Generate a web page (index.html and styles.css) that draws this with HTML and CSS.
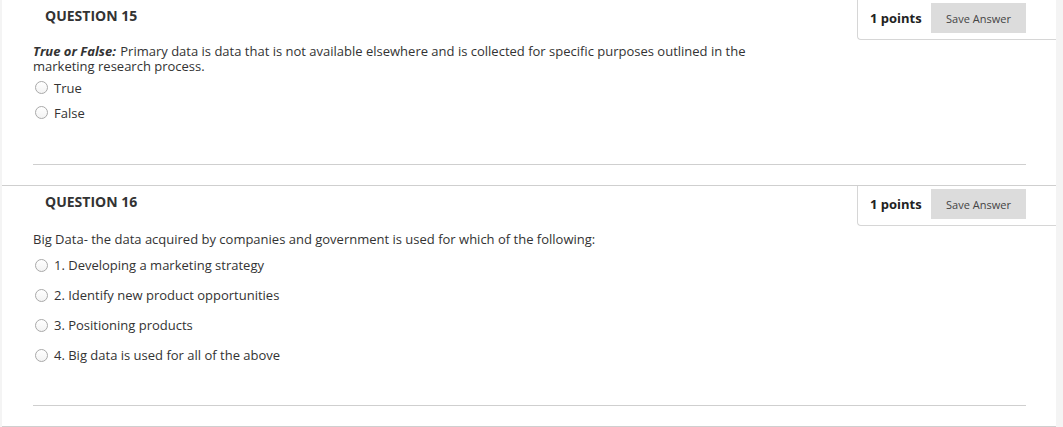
FILE: index.html
```html
<!DOCTYPE html>
<html>
<head>
<meta charset="utf-8">
<link rel="stylesheet" href="styles.css">
</head>
<body>
<div class="page">
  <section class="question">
    <div class="q-head">
      <h3 class="q-title">QUESTION 15</h3>
      <div class="points-box">
        <span class="points">1 points</span>
        <button class="save-btn">Save Answer</button>
      </div>
    </div>
    <div class="q-body">
      <p class="q-text"><b class="lead"><i>True or False:</i></b> Primary data is data that is not available elsewhere and is collected for specific purposes outlined in the marketing research process.</p>
      <ul class="options tf">
        <li class="option"><span class="radio"></span><span>True</span></li>
        <li class="option"><span class="radio"></span><span>False</span></li>
      </ul>
      <hr class="sep sep-tf">
    </div>
  </section>
  <section class="question">
    <div class="q-head">
      <h3 class="q-title">QUESTION 16</h3>
      <div class="points-box">
        <span class="points">1 points</span>
        <button class="save-btn">Save Answer</button>
      </div>
    </div>
    <div class="q-body">
      <p class="q-text q-text-mc">Big Data- the data acquired by companies and government is used for which of the following:</p>
      <ul class="options mc">
        <li class="option"><span class="radio"></span><span>1. Developing a marketing strategy</span></li>
        <li class="option"><span class="radio"></span><span>2. Identify new product opportunities</span></li>
        <li class="option"><span class="radio"></span><span>3. Positioning products</span></li>
        <li class="option"><span class="radio"></span><span>4. Big data is used for all of the above</span></li>
      </ul>
      <hr class="sep sep-mc">
    </div>
  </section>
</div>
</body>
</html>
```

FILE: styles.css
```css
* { box-sizing: border-box; }
html, body {
  margin: 0;
  padding: 0;
  background: #f4f4f4;
}
body {
  font-family: "Open Sans", "Liberation Sans", sans-serif;
  color: #333;
  padding-left: 2px;
}
.page {
  width: 1054px;
  background: #fff;
}
.question {
  border-bottom: 1px solid #cfcfcf;
}
.q-head {
  display: flex;
  justify-content: space-between;
  align-items: flex-start;
}
.q-title {
  margin: 0;
  padding: 6px 0 0 43px;
  font-size: 14px;
  line-height: 20px;
  font-weight: 700;
  color: #333;
}
.points-box {
  width: 199px;
  display: flex;
  align-items: center;
  padding: 3px 30px 6px 12px;
  border-left: 1px solid #d6d6d6;
  border-bottom: 1px solid #d6d6d6;
  border-bottom-left-radius: 4px;
}
.points {
  font-size: 13px;
  font-weight: 700;
  color: #222;
  flex: 1;
}
.save-btn {
  display: block;
  width: 95px;
  height: 30px;
  margin: 0;
  border: none;
  background: #dcdcdc;
  color: #444;
  font-family: inherit;
  font-size: 11px;
  padding: 0;
}
.q-body {
  padding: 4px 31px 0 31px;
}
.q-text {
  margin: 0;
  font-size: 13px;
  line-height: 15px;
  width: 730px;
}
.lead {
  display: inline-block;
  margin-right: 1px;
}
.q-text-mc {
  margin-top: 2px;
  width: auto;
}
.options {
  list-style: none;
  margin: 1px 0 0 0;
  padding: 0;
}
.option {
  display: flex;
  align-items: center;
  gap: 6px;
  padding-left: 2px;
  font-size: 13px;
}
.tf .option { height: 25px; }
.mc { margin-top: 3px; }
.mc .option { height: 30px; }
.radio {
  width: 13px;
  height: 13px;
  border-radius: 50%;
  border: 1px solid #a9a9a9;
  background: linear-gradient(#fff, #f3f3f3);
  flex: none;
}
.sep {
  border: none;
  border-top: 1px solid #cfcfcf;
  margin: 0;
  width: 993px;
}
.sep-tf { margin-top: 39px; margin-bottom: 20px; }
.sep-mc { margin-top: 35px; margin-bottom: 20px; }
```
